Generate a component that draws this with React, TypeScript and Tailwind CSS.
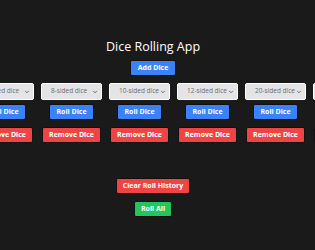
import { ChevronDown } from "lucide-react";

const dice = [6, 8, 10, 12, 20, 100];

function DiceColumn({ sides }: { sides: number }) {
  return (
    <div className="flex w-[61px] shrink-0 flex-col items-center">
      <div className="relative flex h-[17px] w-full items-center rounded-[2px] border border-white bg-[#e4e4e7] pl-[9px]">
        <span className="text-[6.5px] leading-none text-[#6b6b6b]">{sides}-sided dice</span>
        <ChevronDown className="pointer-events-none absolute right-[3px] top-[5px] h-[6px] w-[6px] text-[#444]" strokeWidth={3} aria-hidden />
      </div>
      <button className="mt-[4px] h-[16px] rounded-[2px] border border-[#111] bg-[#3b82f6] px-[6px] text-[7px] font-bold text-white">
        Roll Dice
      </button>
      <button className="mt-[7px] h-[16px] rounded-[2px] border border-[#111] bg-[#ef4444] px-[6px] text-[7px] font-bold text-white">
        Remove Dice
      </button>
    </div>
  );
}

export default function App() {
  return (
    <div
      className="flex h-screen flex-col items-center overflow-hidden bg-[#1a1a1a] pr-[9px] pt-[37px]"
      style={{ fontFamily: '"Open Sans", "Noto Sans", sans-serif' }}
    >
      <h1 className="text-[12.5px] leading-[20px] text-white">Dice Rolling App</h1>
      <button className="mt-[3px] h-[16px] rounded-[2px] border border-[#111] bg-[#3b82f6] px-[7px] text-[7px] font-bold text-white">
        Add Dice
      </button>
      <div className="ml-[41px] mt-[7px] flex shrink-0 gap-[7px]">
        {dice.map((d) => (
          <DiceColumn key={d} sides={d} />
        ))}
      </div>
      <button className="mt-[35px] h-[16px] rounded-[2px] border border-[#111] bg-[#ef4444] px-[6px] text-[7px] font-bold text-white">
        Clear Roll History
      </button>
      <button className="mt-[7px] h-[16px] rounded-[2px] border border-[#111] bg-[#22c55e] px-[6px] text-[7px] font-bold text-white">
        Roll All
      </button>
    </div>
  );
}
